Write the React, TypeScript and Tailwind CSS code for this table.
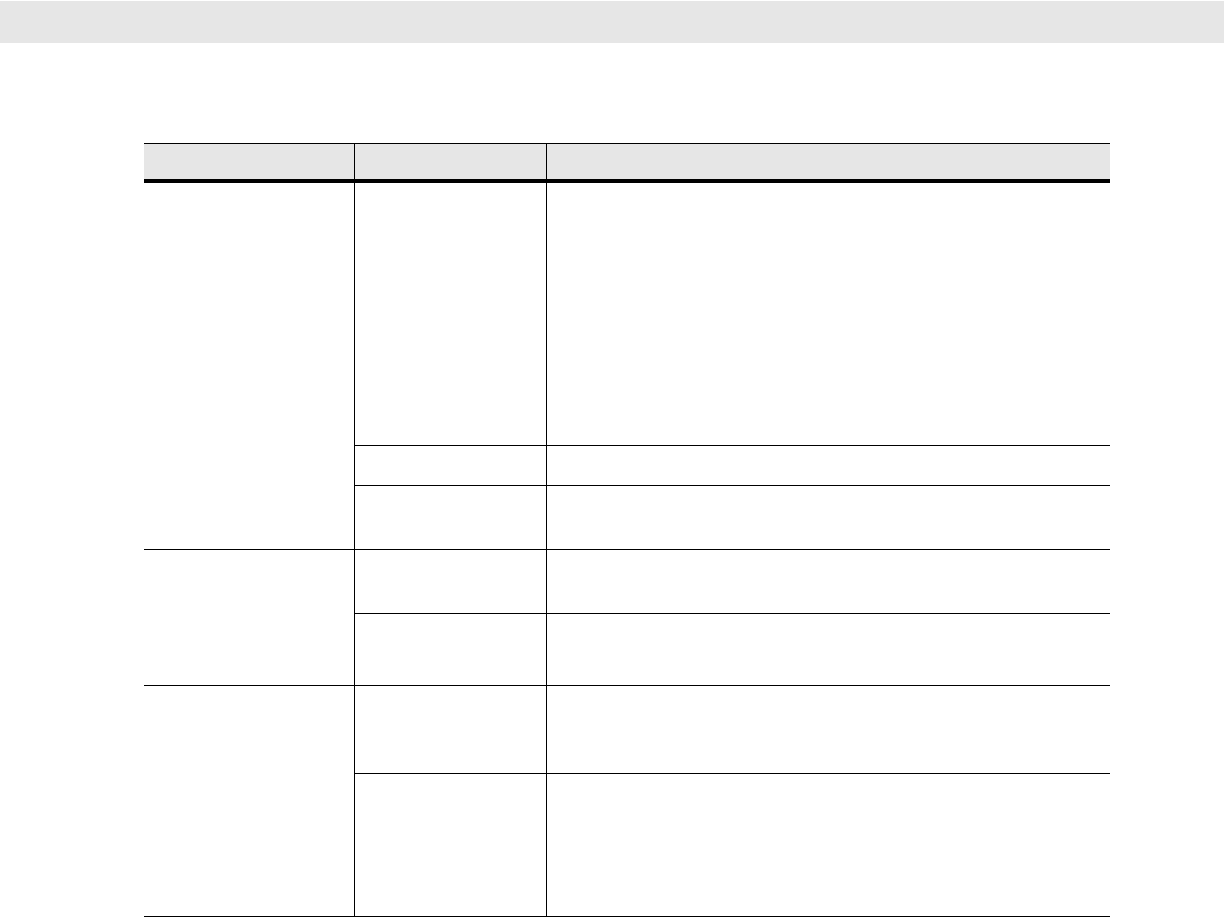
import React from "react";

type SubRow = { h: string; border: boolean };
type Group = { rows: SubRow[] };

const groups: Group[] = [
  {
    rows: [
      { h: "h-[263px]", border: true },
      { h: "h-[40px]", border: true },
      { h: "h-[63px]", border: false },
    ],
  },
  {
    rows: [
      { h: "h-[64px]", border: true },
      { h: "h-[71px]", border: false },
    ],
  },
  {
    rows: [
      { h: "h-[88px]", border: true },
      { h: "h-[142px]", border: false },
    ],
  },
];

export default function App() {
  return (
    <div className="min-h-screen bg-white pt-px" style={{ fontFamily: '"Liberation Sans", Arial, sans-serif' }}>
      {/* Top bar */}
      <div className="h-[42px] w-full bg-[#e6e6e6]" />

      {/* Table */}
      <div className="ml-[144px] mt-[100px] w-[966px]">
        {/* Header */}
        <div className="flex h-[40px] border-t border-b-4 border-black bg-[#e6e6e6]">
          <div className="w-[210px]" />
          <div className="w-[192px] border-l border-black" />
          <div className="flex-1 border-l border-black" />
        </div>

        {/* Body */}
        {groups.map((g, gi) => (
          <div key={gi} className="flex border-b border-black">
            <div className="w-[210px]" />
            <div className="flex flex-1 flex-col border-l border-black">
              {g.rows.map((r, ri) => (
                <div
                  key={ri}
                  className={`flex ${r.h} ${r.border ? "border-b border-black" : ""}`}
                >
                  <div className="w-[191px]" />
                  <div className="flex-1 border-l border-black" />
                </div>
              ))}
            </div>
          </div>
        ))}
      </div>
    </div>
  );
}
